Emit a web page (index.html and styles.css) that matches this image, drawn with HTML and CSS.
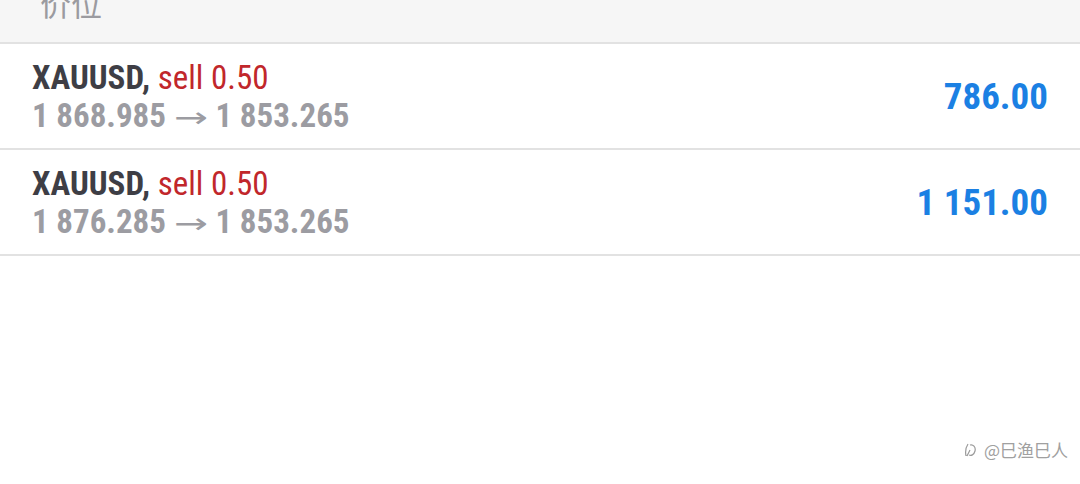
FILE: index.html
```html
<!DOCTYPE html>
<html lang="zh">
<head>
    <meta charset="UTF-8">
    <meta name="viewport" content="width=device-width, initial-scale=1.0">
    <link rel="stylesheet" href="styles.css">
    <title>Positions</title>
</head>
<body>
    <div class="section-head">
        <span class="section-title">价位</span>
    </div>

    <div class="trade-list">
        <div class="trade-row">
            <div class="trade-info">
                <div class="trade-symbol">XAUUSD, <span class="trade-type">sell 0.50</span></div>
                <div class="trade-prices">1 868.985 <span class="arrow">&rarr;</span>1 853.265</div>
            </div>
            <div class="trade-profit">786.00</div>
        </div>
        <div class="trade-row">
            <div class="trade-info">
                <div class="trade-symbol">XAUUSD, <span class="trade-type">sell 0.50</span></div>
                <div class="trade-prices">1 876.285 <span class="arrow">&rarr;</span>1 853.265</div>
            </div>
            <div class="trade-profit">1 151.00</div>
        </div>
    </div>

    <div class="watermark">
        <svg width="14" height="18" viewBox="0 0 14 18">
            <path d="M4 3 C2 6 1 10 2 15 M6 4 C9 3 12 6 11 10 C10 14 7 15 5 14 M3 15 L6 9" fill="none" stroke="#9a9a9a" stroke-width="1.2"/>
        </svg>
        <span>@巳渔巳人</span>
    </div>
</body>
</html>
```

FILE: styles.css
```css
body {
    margin: 0;
    background: #fff;
    font-family: "Roboto Condensed", "Liberation Sans Narrow", Roboto, "Noto Sans CJK SC", sans-serif;
    height: 484px;
    overflow: hidden;
    position: relative;
}

.section-head {
    height: 42px;
    background: #f6f6f6;
    border-bottom: 2px solid #e2e2e2;
    overflow: hidden;
    padding-left: 40px;
}

.section-title {
    display: block;
    margin-top: -17px;
    font-size: 31px;
    line-height: 40px;
    color: #9b9ba0;
    font-family: "Noto Sans CJK SC", sans-serif;
}

.trade-row {
    display: flex;
    align-items: center;
    justify-content: space-between;
    height: 104px;
    padding: 0 32px;
    border-bottom: 2px solid #e2e2e2;
}

.trade-info {
    font-size: 33px;
    line-height: 38px;
    padding-top: 4px;
}

.trade-symbol {
    color: #3e3e45;
    font-weight: bold;
}

.trade-type {
    color: #c1272b;
    font-weight: normal;
}

.trade-prices {
    color: #9c9ca2;
    font-weight: bold;
}

.arrow {
    display: inline-block;
    width: 36px;
    margin-right: 6px;
    font-weight: normal;
    font-family: "DejaVu Sans", sans-serif;
    font-size: 28px;
    transform: scaleX(1.45);
    transform-origin: left center;
}

.trade-profit {
    font-size: 37px;
    font-weight: bold;
    color: #1b80e3;
}

.watermark {
    position: absolute;
    right: 12px;
    bottom: 22px;
    display: flex;
    align-items: center;
    gap: 6px;
    font-size: 17px;
    color: #a0a0a0;
    font-family: "Noto Sans CJK SC", sans-serif;
}
```
